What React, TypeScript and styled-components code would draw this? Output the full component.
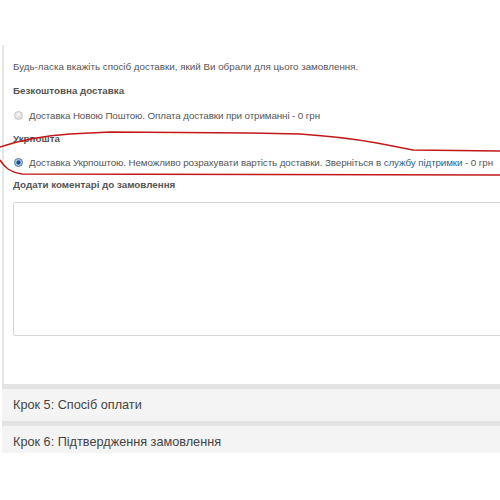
import React from 'react';
import styled, { createGlobalStyle } from 'styled-components';

const GlobalStyle = createGlobalStyle`
  html, body {
    margin: 0;
    padding: 0;
    background: #ffffff;
    overflow: hidden;
  }
`;

const Page = styled.div`
  position: relative;
  width: 500px;
  height: 453px;
  padding-top: 45px;
  box-sizing: border-box;
  overflow: hidden;
  font-family: 'Liberation Sans', Arial, sans-serif;
`;

const Panel = styled.div`
  margin-left: 2px;
  margin-right: -20px;
  padding: 10px 0 48px 9px;
  border-left: 2px solid #e6e6e6;
  background: #ffffff;
`;

const Intro = styled.div`
  font-size: 9.8px;
  line-height: 24px;
  color: #555555;
`;

const GroupTitle = styled.div`
  font-size: 9.8px;
  line-height: 24px;
  font-weight: bold;
  color: #555555;
`;

const Option = styled.div<{ $height?: number }>`
  display: flex;
  align-items: center;
  height: ${({ $height }) => $height || 24}px;
  font-size: 9.8px;
  letter-spacing: -0.1px;
  color: #555555;
  white-space: pre;
`;

const Radio = styled.span<{ $checked?: boolean }>`
  display: inline-block;
  box-sizing: border-box;
  width: 9px;
  height: 9px;
  margin: 0 6px 0 1px;
  border-radius: 50%;
  border: 1px solid ${({ $checked }) => ($checked ? '#4a6f94' : '#c4c4c4')};
  background: ${({ $checked }) =>
    $checked
      ? 'radial-gradient(circle, #1b4f87 0 1.8px, #8fb8de 2.3px, #d6e6f4 4px)'
      : 'radial-gradient(circle at 40% 35%, #f4f4f4, #d6d6d6)'};
  flex-shrink: 0;
`;

const Link = styled.a`
  color: #2d5f8e;
  text-decoration: none;
`;

const Comment = styled.textarea`
  display: block;
  box-sizing: border-box;
  width: 540px;
  height: 134px;
  margin-top: 5px;
  border: 1px solid #d4d4d4;
  border-radius: 2px;
  background: #ffffff;
  resize: none;
  outline: none;
`;

const Step = styled.div`
  margin-left: 2px;
  margin-right: -20px;
  height: 32px;
  padding-left: 11px;
  display: flex;
  align-items: center;
  border-top: 5px solid #e3e3e3;
  background: #f4f4f4;
  font-size: 12.7px;
  color: #444444;
`;

const Annotation = styled.svg`
  position: absolute;
  left: 0;
  top: 0;
  pointer-events: none;
`;

export default function App() {
  return (
    <Page>
      <GlobalStyle />
      <Panel>
        <Intro>Будь-ласка вкажіть спосіб доставки, який Ви обрали для цього замовлення.</Intro>
        <GroupTitle>Безкоштовна доставка</GroupTitle>
        <Option>
          <Radio />
          Доставка Новою Поштою. Оплата доставки при отриманні - 0 грн
        </Option>
        <GroupTitle>Укрпошта</GroupTitle>
        <Option $height={22}>
          <Radio $checked />
          {'Доставка Укрпоштою. Неможливо розрахувати вартість доставки. Зверніться в '}
          <Link href="#">службу підтримки</Link>
          {' - 0 грн'}
        </Option>
        <GroupTitle>Додати коментарі до замовлення</GroupTitle>
        <Comment />
      </Panel>
      <Step>Крок 5: Спосіб оплати</Step>
      <Step>Крок 6: Підтвердження замовлення</Step>
      <Annotation width="500" height="453" viewBox="0 0 500 453">
        <path
          d="M0 147 C18 141 40 136 70 134 L110 132 L250 133 L300 134 C330 136 355 139 377 143 L413 150 L500 151"
          fill="none"
          stroke="#c21818"
          strokeWidth="1.5"
        />
        <path
          d="M0 160 C5 168 10 172 22 174 L500 175"
          fill="none"
          stroke="#c21818"
          strokeWidth="1.5"
        />
      </Annotation>
    </Page>
  );
}
